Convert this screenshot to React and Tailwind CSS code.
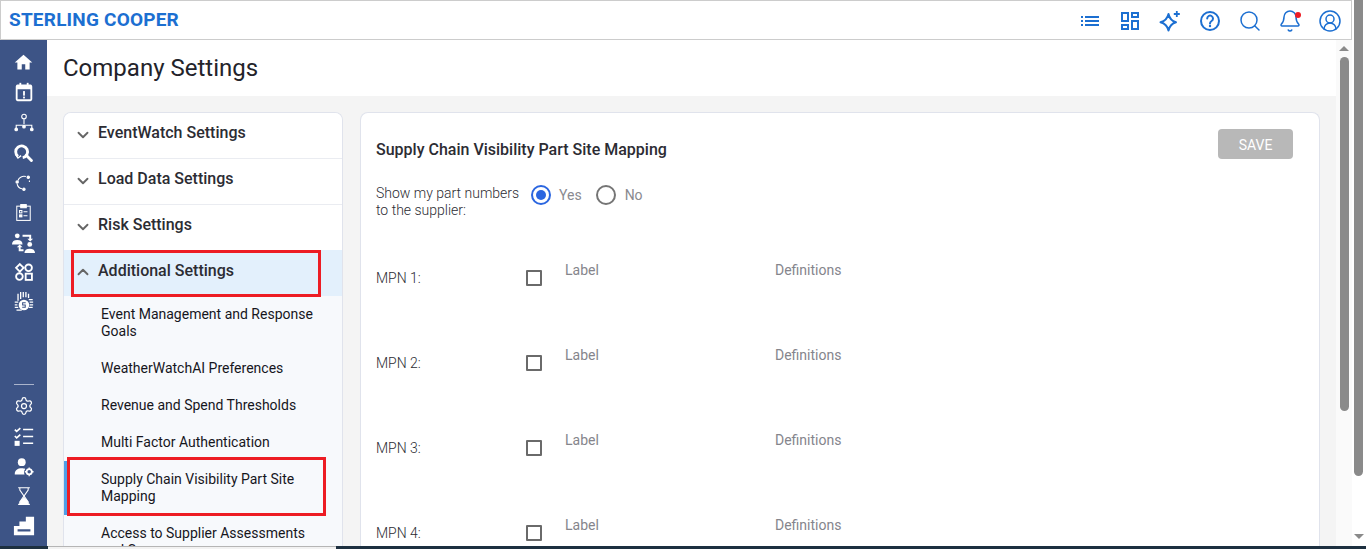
import { Bell, ChevronDown, ChevronUp, CircleUserRound, Search, Settings } from "lucide-react";

const BLUE = "#1c6fd1";

const Home = () => (
  <svg width="21" height="21" viewBox="0 0 24 24" fill="white">
    <path d="M10 20v-6h4v6h5v-8h3L12 3 2 12h3v8z" />
  </svg>
);

const Calendar = () => (
  <svg width="22" height="22" viewBox="0 0 24 24" fill="white">
    <rect x="4" y="5" width="16" height="16" rx="1" fill="none" stroke="white" strokeWidth="2" />
    <rect x="4" y="4" width="16" height="5" />
    <rect x="7" y="2" width="2" height="3" />
    <rect x="15" y="2" width="2" height="3" />
    <rect x="11" y="11" width="2" height="5" />
    <rect x="11" y="17" width="2" height="2" />
  </svg>
);

const Hierarchy = () => (
  <svg width="22" height="22" viewBox="0 0 24 24" fill="none" stroke="white" strokeWidth="1.2" className="mt-[2px]">
    <circle cx="12" cy="5" r="2.5" />
    <path d="M12 8v5M3.500 18v-3.500h17v3.500" />
    <circle cx="3.500" cy="19" r="1.4" fill="white" />
    <circle cx="12" cy="16" r="1.4" fill="white" />
    <circle cx="20.500" cy="19" r="1.4" fill="white" />
  </svg>
);

const SearchLoop = () => (
  <svg width="19" height="19" viewBox="0 0 24 24" fill="none" stroke="white" strokeWidth="3.6">
    <path d="M5 17a7.500 7.500 0 1 1 6 1.500" />
    <path d="M15.500 15.500L22 22" strokeLinecap="round" />
    <path d="M2 14l3 5 4-3" strokeWidth="1.800" />
  </svg>
);

const Loop = () => (
  <svg width="19" height="19" viewBox="0 0 24 24" fill="white" stroke="white" strokeWidth="1.4">
    <path d="M15 4.500A8 8 0 0 0 5 9.500M4 14a8 8 0 0 0 6 6" fill="none" />
    <circle cx="18" cy="5.500" r="1.500" />
    <circle cx="4" cy="11.500" r="1.500" />
    <circle cx="12.500" cy="20.500" r="1.500" />
    <path d="M19.500 9.500v2" fill="none" />
  </svg>
);

const Clipboard = () => (
  <svg width="19" height="19" viewBox="0 0 24 24" fill="none" stroke="white" strokeWidth="1.3">
    <rect x="3.500" y="4" width="17" height="18" />
    <rect x="8.500" y="2" width="7" height="4" fill="white" />
    <rect x="7" y="9.500" width="3" height="3" />
    <path d="M12 11h5M12 16h5" />
    <rect x="7" y="15" width="3" height="2.500" fill="white" />
  </svg>
);

const PeopleSwap = () => (
  <svg width="23" height="23" viewBox="0 0 24 24" fill="white">
    <circle cx="5.500" cy="5" r="2.500" />
    <path d="M0 14c0-3 2-4.500 5.500-4.500S11 11 11 14z" />
    <circle cx="18.500" cy="14" r="2.500" />
    <path d="M13 23c0-3 2-4.500 5.500-4.500S24 20 24 23z" />
    <path d="M11 4h9v4h2l-3 3-3-3h2V6h-7zM12 21H7v-4H5l3-3 3 3H9v2h3z" />
  </svg>
);

const Shapes = () => (
  <svg width="20" height="20" viewBox="0 0 24 24" fill="none" stroke="white" strokeWidth="2.200">
    <path d="M7 2.500L11.500 7 7 11.500 2.500 7z" />
    <circle cx="17.500" cy="7" r="4" />
    <circle cx="6.500" cy="17.500" r="4" />
    <rect x="14" y="14" width="7.500" height="7.500" />
  </svg>
);

const Money = () => (
  <svg width="21" height="21" viewBox="0 0 24 24" fill="white" className="mb-[2px]">
    <path d="M8 1h1.500v8H8zM11 1h1.500v6H11zM14 1h1.500v6H14zM5 3h1.500v8H5zM17 3h1.500v5H17z" />
    <path d="M18 9h4.500v1.500H18zM19 12h4v1.500h-4zM19 15h4v1.500h-4zM18 18h4.500v1.500H18z" />
    <path d="M2 12h4v1.500H2zM2 15h3v1.500H2zM2 18h4v1.500H2zM4 21h6v1.500H4z" />
    <circle cx="12.500" cy="16" r="6" />
    <path d="M14.500 13.500h-3.500v2.500h3v2.500h-3.500" fill="none" stroke="#3d5486" strokeWidth="1.200" />
  </svg>
);

const Checklist = () => (
  <svg width="22" height="22" viewBox="0 0 24 24" fill="none" stroke="white" strokeWidth="2">
    <path d="M2 5l2 2 4-3.500M2 12l2 2 4-3.500" strokeWidth="1.800" />
    <path d="M11 5h11M11 12.500h11M11 20h11" strokeWidth="1.600" />
    <rect x="2.500" y="18" width="4" height="4" strokeWidth="1.500" fill="white" />
  </svg>
);

const PersonGear = () => (
  <svg width="21" height="21" viewBox="0 0 24 24" fill="white">
    <circle cx="10" cy="7" r="4.500" />
    <path d="M2 21c0-5 3.500-7 8-7 1.500 0 3 .2 4 .8-1.500 1.500-1.800 4-.8 6.200z" />
    <circle cx="18.500" cy="18" r="3" fill="none" stroke="white" strokeWidth="2" />
    <path d="M18.500 13v2M18.500 21v2M13.500 18h2M21.500 18h2" stroke="white" strokeWidth="1.500" />
  </svg>
);

const Hourglass = () => (
  <svg width="20" height="20" viewBox="0 0 24 24" fill="none" stroke="white" strokeWidth="1.300">
    <path d="M5 2h14M5 22h14M7 2v3l5 7 5-7V2M7 22v-3l5-7 5 7v3" />
    <path d="M7.500 21v-2l4.500-5 4.500 5v2z" fill="white" />
  </svg>
);

const Factory = () => (
  <svg width="22" height="22" viewBox="0 0 24 24" fill="white">
    <path d="M1 12h6V7h7V2h9v20H1zM5 15.500v2.500h14v-2.500z" fillRule="evenodd" />
  </svg>
);

const Sparkle = () => (
  <svg width="24" height="24" viewBox="0 0 24 24" fill="none" stroke={BLUE} strokeWidth="2" strokeLinejoin="round">
    <path d="M10.500 5C11.500 9.500 13.500 12 18 13.200 13.500 14.500 11.500 17 10.500 21.500 9.500 17 7 14.500 2.500 13.200 7 12 9.500 9.500 10.500 5z" />
    <path d="M18.800 2v6M15.800 5h6" strokeWidth="1.800" />
  </svg>
);

const topIcons = [
  <svg width="24" height="24" viewBox="0 0 24 24" fill={BLUE}>
    <path d="M3 7h2v2H3zM3 11h2v2H3zM3 15h2v2H3zM7 7h14v2H7zM7 11h14v2H7zM7 15h14v2H7z" />
  </svg>,
  <svg width="24" height="24" viewBox="0 0 24 24" fill="none" stroke={BLUE} strokeWidth="2">
    <rect x="4" y="4" width="6" height="8" />
    <rect x="14" y="4" width="6" height="4" />
    <rect x="4" y="16" width="6" height="4" />
    <rect x="14" y="12" width="6" height="8" />
  </svg>,
  <Sparkle />,
  <svg width="24" height="24" viewBox="0 0 24 24" fill="none" stroke={BLUE} strokeWidth="2">
    <circle cx="12" cy="12" r="9" />
    <path d="M9.200 9.500a2.900 2.900 0 1 1 4.400 2.500c-1 .6-1.600 1.200-1.600 2.500" strokeLinecap="round" />
    <path d="M12 17v.1" strokeLinecap="round" strokeWidth="2.400" />
  </svg>,
  <Search size={24} strokeWidth={1.5} color={BLUE} />,
  <div className="relative flex">
    <Bell size={24} strokeWidth={1.5} color={BLUE} />
    <span className="absolute top-[3px] right-px h-[6px] w-[6px] rounded-full bg-[#ed1c24]" />
  </div>,
  <CircleUserRound size={24} strokeWidth={1.5} color={BLUE} />,
];

const sideTop = [Home, Calendar, Hierarchy, SearchLoop, Loop, Clipboard, PeopleSwap, Shapes, Money];
const sideBottom = [() => <Settings size={20} strokeWidth={1.5} color="white" />, Checklist, PersonGear, Hourglass, Factory];

const Arrow = ({ up }) => (
  <div
    className={
      up
        ? "h-0 w-0 border-x-[5px] border-b-[5px] border-x-transparent border-b-[#8a8a8a]"
        : "h-0 w-0 border-x-[5px] border-t-[5px] border-x-transparent border-t-[#8a8a8a]"
    }
  />
);

const NavHead = ({ label, open }) => (
  <div
    className={`relative flex h-[46px] items-center pl-[10px] ${
      open ? "-mt-px bg-[#e3f0fc]" : "border-b border-[#eaecf1] bg-white"
    }`}
  >
    {open ? (
      <ChevronUp size={18} strokeWidth={2.5} color="#666" className="mb-[2px]" />
    ) : (
      <ChevronDown size={18} strokeWidth={2.5} color="#666" className="mb-[2px]" />
    )}
    <span className={`ml-[6px] text-base leading-5 font-medium text-[#2c2c33] ${open ? "mb-[4px]" : "mb-[6px]"}`}>
      {label}
    </span>
    {open && <div className="absolute top-0 left-[7px] h-[47px] w-[250px] border-[3px] border-[#ed1c24]" />}
  </div>
);

const NavItem = ({ label, active }) => (
  <div className="relative py-[10px] pr-5 pl-[37px] text-sm leading-[17px] text-[#16161d]">
    {label}
    {active && (
      <>
        <div className="absolute top-0 bottom-0 left-0 w-[3px] bg-[#4f9fe8]" />
        <div className="absolute top-[-4px] left-[3px] h-[59px] w-[259px] border-[3px] border-[#ed1c24]" />
      </>
    )}
  </div>
);

const MpnRow = ({ n }) => (
  <div className="flex h-[85px] items-start text-sm leading-[17px]">
    <div className="mt-[12px] flex h-4 w-[150px] items-center font-light text-[#2c2c33]">MPN {n}:</div>
    <div className="mt-[12px] h-4 w-4 rounded-[1px] border-2 border-[#6a6a6a]" />
    <div className="mt-[4px] ml-[23px] w-[210px] text-[#85858c]">Label</div>
    <div className="mt-[4px] text-[#85858c]">Definitions</div>
  </div>
);

export default function App() {
  return (
    <div className="flex h-[549px] w-[1366px] flex-col overflow-hidden bg-white font-['Roboto',sans-serif]">
      <div className="flex h-[546px] min-h-0">
        <div className="flex w-[1352px] flex-col">
          <header className="flex h-10 shrink-0 items-center justify-between border border-[#cccccc] bg-white pr-px pl-2">
            <div className="text-[19px] font-bold tracking-[0.2px] text-[#1c6fd1]">STERLING COOPER</div>
            <div className="flex">
              {topIcons.map((icon, i) => (
                <div key={i} className="flex h-10 w-10 items-center justify-center pt-[2px]">
                  {icon}
                </div>
              ))}
            </div>
          </header>

          <div className="flex min-h-0 flex-1">
            <aside className="flex w-[47px] shrink-0 flex-col items-center bg-[#3d5486] pt-[7px] pb-[5px]">
              {sideTop.map((Icon, i) => (
                <div key={i} className="flex h-[30px] items-center justify-center">
                  <Icon />
                </div>
              ))}
              <div className="mt-auto mb-[6px] h-px w-5 bg-[#aab4cc]" />
              {sideBottom.map((Icon, i) => (
                <div key={i} className="flex h-[30px] items-center justify-center">
                  <Icon />
                </div>
              ))}
            </aside>

            <main className="flex min-w-0 flex-1 flex-col overflow-hidden">
              <div className="flex h-14 shrink-0 items-center bg-white pl-4 text-2xl text-[#23232a]">
                Company Settings
              </div>
              <div className="flex min-h-0 flex-1 gap-[17px] bg-[#f4f4f4] pt-4 pr-4 pl-4">
                <div className="w-[280px] shrink-0 overflow-hidden rounded-t-lg border border-b-0 border-[#e0e3ec] bg-[#f7f9fc]">
                  <NavHead label="EventWatch Settings" />
                  <NavHead label="Load Data Settings" />
                  <NavHead label="Risk Settings" />
                  <NavHead label="Additional Settings" open />
                  <NavItem label="Event Management and Response Goals" />
                  <NavItem label="WeatherWatchAI Preferences" />
                  <NavItem label="Revenue and Spend Thresholds" />
                  <NavItem label="Multi Factor Authentication" />
                  <NavItem label="Supply Chain Visibility Part Site Mapping" active />
                  <NavItem label="Access to Supplier Assessments and Surveys" />
                </div>

                <section className="min-w-0 flex-1 rounded-t-lg border border-b-0 border-[#e0e3ec] bg-white pt-4 pr-[26px] pl-[15px]">
                  <div className="flex h-[30px] items-center justify-between">
                    <h2 className="mt-[12px] text-base font-medium text-[#2c2c33]">
                      Supply Chain Visibility Part Site Mapping
                    </h2>
                    <button className="h-[30px] w-[75px] rounded bg-[#b8b8b8] pt-px text-sm text-white">SAVE</button>
                  </div>
                  <div className="mt-[26px] flex text-sm leading-[17px] font-light text-[#2c2c33]">
                    <div className="w-[155px]">
                      Show my part numbers
                      <br />
                      to the supplier:
                    </div>
                    <div className="flex h-5 items-center font-normal text-[#8a8a90]">
                      <div className="flex h-5 w-5 items-center justify-center rounded-full border-2 border-[#2b66e0]">
                        <div className="h-[10px] w-[10px] rounded-full bg-[#2b66e0]" />
                      </div>
                      <span className="ml-2">Yes</span>
                      <div className="ml-[14px] h-5 w-5 rounded-full border-2 border-[#757575]" />
                      <span className="ml-[9px]">No</span>
                    </div>
                  </div>
                  <div className="mt-[39px]">
                    {[1, 2, 3, 4].map((n) => (
                      <MpnRow key={n} n={n} />
                    ))}
                  </div>
                </section>
              </div>
            </main>

            <div className="flex w-4 shrink-0 flex-col items-center bg-[#fafafa] pt-[6px]">
              <Arrow up />
              <div className="mt-[6px] h-[354px] w-[9px] rounded-full bg-[#8a8a8a]" />
            </div>
          </div>
        </div>

        <div className="flex w-[14px] flex-col pl-[2px]">
          <div className="h-[476px] w-[9px] rounded-b-full bg-[#8a8a8a]" />
          <div className="mt-[58px]">
            <Arrow />
          </div>
        </div>
      </div>

      <div className="flex h-[3px] bg-[#1d3040]">
        <div className="ml-[48px] h-full w-[288px] border-t border-[#b5b5b5] bg-[#f2f2f2]" />
      </div>
    </div>
  );
}
